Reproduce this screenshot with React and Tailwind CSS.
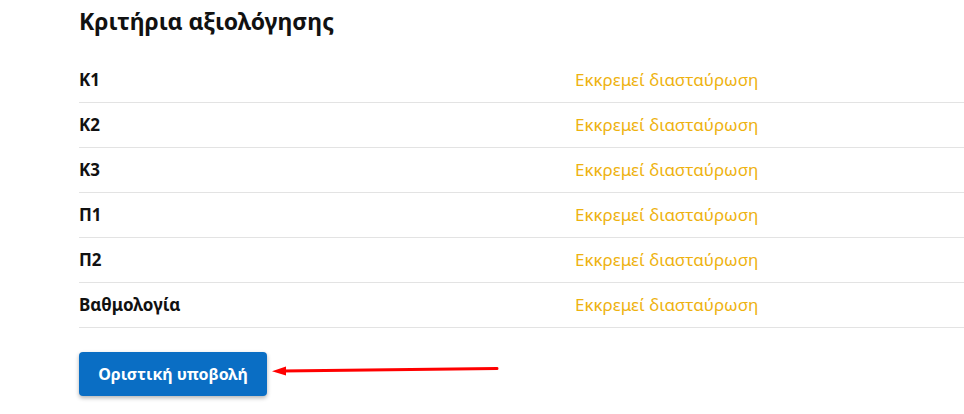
const rows = ["Κ1", "Κ2", "Κ3", "Π1", "Π2", "Βαθμολογία"];

export default function App() {
  return (
    <div className="min-h-screen bg-white overflow-hidden" style={{ fontFamily: '"Noto Sans", "Open Sans", sans-serif' }}>
      <div className="pl-[79px] pt-[5px] w-[1100px]">
        <h1 className="text-[23px] font-bold text-[#111] leading-[33px]">Κριτήρια αξιολόγησης</h1>
        <div className="mt-[20px]">
          {rows.map((r) => (
            <div key={r} className="grid grid-cols-[496px_1fr] items-center h-[45px] border-b border-[#e3e3e3]">
              <div className="text-[17px] font-bold text-[#111]">{r}</div>
              <div className="text-[17px] text-[#eeb20f]">Εκκρεμεί διασταύρωση</div>
            </div>
          ))}
        </div>
        <div className="mt-[24px] flex items-start">
          <button className="w-[188px] h-[44px] rounded-[4px] bg-[#0a6ec4] text-white text-[16px] font-bold shadow-[0_2px_4px_rgba(0,0,0,0.3)]">
            Οριστική υποβολή
          </button>
          <svg width="230" height="14" viewBox="0 0 230 14" className="ml-[5px] mt-[12px]">
            <line x1="10" y1="7" x2="225" y2="4.5" stroke="#ff0000" strokeWidth="3" strokeLinecap="round" />
            <polygon points="0,7.2 14,2.5 14,11.5" fill="#ff0000" />
          </svg>
        </div>
      </div>
    </div>
  );
}
